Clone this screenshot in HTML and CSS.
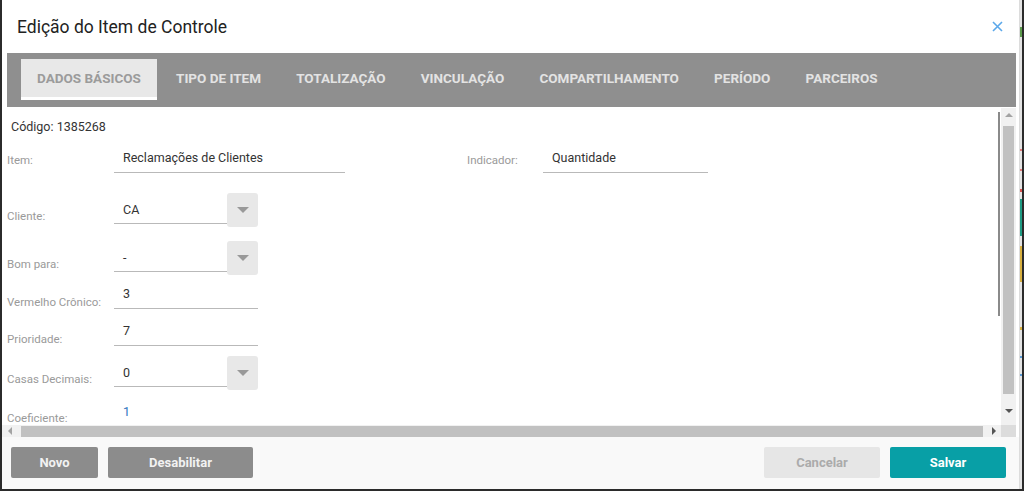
FILE: index.html
```html
<!DOCTYPE html>
<html lang="pt-BR">
<head>
<meta charset="UTF-8" />
<meta name="viewport" content="width=device-width, initial-scale=1.0"/>
<title>Edição do Item de Controle</title>
<link rel="stylesheet" href="styles.css">
</head>
<body>
<div class="page">
  <div class="dialog">
    <div class="header">
      <h1>Edição do Item de Controle</h1>
      <button class="close" title="Fechar">
        <svg width="11" height="11" viewBox="0 0 11 11"><path d="M1 1L10 10M10 1L1 10" stroke="#5ba8ea" stroke-width="1.6" fill="none"/></svg>
      </button>
    </div>

    <div class="tabs">
      <div class="tab active">DADOS BÁSICOS</div>
      <div class="tab">TIPO DE ITEM</div>
      <div class="tab">TOTALIZAÇÃO</div>
      <div class="tab">VINCULAÇÃO</div>
      <div class="tab">COMPARTILHAMENTO</div>
      <div class="tab">PERÍODO</div>
      <div class="tab">PARCEIROS</div>
    </div>

    <div class="body">
      <div class="content">
        <div class="code">Código: 1385268</div>

        <div class="row first">
          <label class="label">Item:</label>
          <div class="input w-item">Reclamações de Clientes</div>
          <label class="label label-ind">Indicador:</label>
          <div class="input w-ind">Quantidade</div>
        </div>

        <div class="row sel row-cliente">
          <label class="label">Cliente:</label>
          <div class="select">
            <div class="select-value">CA</div>
            <div class="select-btn"><span class="caret"></span></div>
          </div>
        </div>

        <div class="row sel row-bom">
          <label class="label">Bom para:</label>
          <div class="select">
            <div class="select-value">-</div>
            <div class="select-btn"><span class="caret"></span></div>
          </div>
        </div>

        <div class="row row-tight">
          <label class="label">Vermelho Crônico:</label>
          <div class="input w-short">3</div>
        </div>

        <div class="row">
          <label class="label">Prioridade:</label>
          <div class="input w-short">7</div>
        </div>

        <div class="row sel">
          <label class="label">Casas Decimais:</label>
          <div class="select">
            <div class="select-value">0</div>
            <div class="select-btn"><span class="caret"></span></div>
          </div>
        </div>

        <div class="row row-last">
          <label class="label">Coeficiente:</label>
          <div class="input w-short link">1</div>
        </div>

        <div class="inner-scroll"></div>
      </div>

      <!-- fake scrollbars of the content panel -->
      <div class="vscroll">
        <span class="arrow up"></span>
        <div class="vthumb"></div>
        <span class="arrow down"></span>
      </div>
      <div class="hscroll">
        <span class="arrow left"></span>
        <div class="hthumb"></div>
        <span class="arrow right"></span>
      </div>
      <div class="corner"></div>
    </div>

    <div class="footer">
      <button class="btn btn-gray btn-novo">Novo</button>
      <button class="btn btn-gray btn-wide">Desabilitar</button>
      <div class="spacer"></div>
      <button class="btn btn-light">Cancelar</button>
      <button class="btn btn-teal">Salvar</button>
    </div>
  </div>
  <div class="strip"></div>
</div>
</body>
</html>
```

FILE: styles.css
```css
* {
  box-sizing: border-box;
}

html, body {
  margin: 0;
  height: 491px;
  overflow: hidden;
}

body {
  background: #2b2b2b;
  padding: 0 2px 2px 2px;
  font-family: Roboto, "Liberation Sans", sans-serif;
}

.page {
  display: flex;
  height: 489px;
}

.dialog {
  width: 1018px;
  background: #fff;
  border-right: 1px solid #dcdcdc;
  display: flex;
  flex-direction: column;
}

.strip {
  flex: 1;
  background: linear-gradient(to bottom,
    #e4e4e4 0, #e4e4e4 27px, #5c9a4c 27px, #5c9a4c 37px,
    #e4e4e4 37px, #e4e4e4 149px, #e07a7a 149px, #e07a7a 151px,
    #e4e4e4 151px, #e4e4e4 169px, #e07a7a 169px, #e07a7a 171px,
    #e4e4e4 171px, #e4e4e4 189px, #d9534f 189px, #d9534f 192px,
    #e4e4e4 192px, #e4e4e4 199px, #1f9c84 199px, #1f9c84 236px,
    #e4e4e4 236px, #e4e4e4 246px, #d8b040 246px, #d8b040 282px,
    #e4e4e4 282px, #e4e4e4 327px, #d8b040 327px, #d8b040 330px,
    #e4e4e4 330px, #e4e4e4 356px, #5b9bd5 356px, #5b9bd5 358px,
    #e4e4e4 358px, #e4e4e4 374px, #5b9bd5 374px, #5b9bd5 376px,
    #e4e4e4 376px);
}

/* header */
.header {
  height: 53px;
  display: flex;
  align-items: center;
  justify-content: space-between;
  padding: 0 16px 0 15px;
}

.header h1 {
  margin: 0;
  font-size: 17.5px;
  font-weight: 400;
  color: #222;
}

.close {
  border: none;
  background: none;
  padding: 0;
  display: flex;
  cursor: pointer;
}

/* tabs */
.tabs {
  height: 54px;
  margin: 0 3px 0 5px;
  background: #8f8f8f;
  display: flex;
  gap: 3.2px;
  padding: 6px 0 0 14px;
}

.tab {
  height: 41px;
  padding: 0 16px;
  line-height: 38px;
  font-size: 13.5px;
  font-weight: 700;
  color: #e3e3e3;
  border-bottom: 3px solid transparent;
  cursor: pointer;
}

.tab.active {
  background: #e8e8e8;
  color: #9b9b9b;
  border-bottom-color: #fff;
}

/* content panel */
.body {
  height: 330px;
  margin-right: 3px;
  padding-top: 1px;
  display: grid;
  grid-template-columns: 1fr 15px;
  grid-template-rows: 1fr 12px;
}

.content {
  position: relative;
  overflow: hidden;
  padding: 9px 0 0 5px;
  display: flex;
  flex-direction: column;
  gap: 10px;
}

.code {
  font-size: 12.5px;
  color: #333;
  padding-left: 4px;
  line-height: 19px;
}

.row {
  display: flex;
  align-items: flex-end;
  flex-shrink: 0;
}

.row-cliente {
  margin-top: 10px;
}

.row-bom {
  margin-top: 4px;
}

.row-tight {
  margin-top: -3px;
}

.label {
  width: 107px;
  font-size: 11.5px;
  line-height: 14px;
  color: #9a9a9a;
}

.row.first .label {
  padding-bottom: 6px;
}

.row.sel .label {
  padding-bottom: 4px;
}

.row-cliente .label {
  padding-bottom: 9px;
}

/* the last row sits under the horizontal scrollbar */
.row-last .label {
  padding-bottom: 2px;
}

.label-ind {
  width: 76px;
  margin-left: 122px;
}

.input {
  height: 27px;
  padding: 4px 0 0 9px;
  font-size: 12.5px;
  line-height: 16px;
  color: #333;
  border-bottom: 1px solid #b9b9b9;
}

.input.link {
  color: #2f77c0;
  border-bottom-color: transparent;
}

.w-item { width: 231px; }
.w-ind { width: 165px; }
.w-short { width: 144px; }

.select {
  width: 144px;
  height: 34px;
  display: flex;
  align-items: flex-start;
}

.select-value {
  flex: 1;
  height: 31px;
  padding: 9px 0 0 9px;
  font-size: 12.5px;
  line-height: 16px;
  color: #333;
  border-bottom: 1px solid #b9b9b9;
}

.select-btn {
  width: 31px;
  height: 34px;
  background: #e8e8e8;
  border-radius: 3px;
  display: flex;
  align-items: center;
  justify-content: center;
}

.caret {
  width: 0;
  height: 0;
  border-left: 6px solid transparent;
  border-right: 6px solid transparent;
  border-top: 6px solid #999;
}

.inner-scroll {
  position: absolute;
  top: 4px;
  right: 1px;
  width: 2px;
  height: 204px;
  background: #8a8a8a;
}

/* scrollbars */
.vscroll {
  background: #f1f1f1;
  display: flex;
  flex-direction: column;
  align-items: center;
}

.vthumb {
  width: 11px;
  height: 268px;
  background: #c1c1c1;
  margin: 9px 0 15px;
}

.hscroll {
  background: #f1f1f1;
  display: flex;
  align-items: center;
}

.hthumb {
  flex: 1;
  height: 11px;
  background: #c1c1c1;
  margin: 0 9px 0 9px;
}

.corner {
  background: #dcdcdc;
}

.arrow {
  width: 0;
  height: 0;
}

.arrow.up {
  margin-top: 5px;
  border-left: 4px solid transparent;
  border-right: 4px solid transparent;
  border-bottom: 4px solid #a3a3a3;
}

.arrow.down {
  border-left: 4px solid transparent;
  border-right: 4px solid transparent;
  border-top: 4px solid #555;
}

.arrow.left {
  margin-left: 6px;
  border-top: 4px solid transparent;
  border-bottom: 4px solid transparent;
  border-right: 4px solid #a3a3a3;
}

.arrow.right {
  margin-right: 5px;
  border-top: 4px solid transparent;
  border-bottom: 4px solid transparent;
  border-left: 4px solid #555;
}

/* footer */
.footer {
  flex: 1;
  background: #f9f9f9;
  display: flex;
  gap: 10px;
  padding: 10px 13px 0 9px;
}

.spacer {
  flex: 1;
}

.btn {
  height: 31px;
  border: none;
  border-radius: 2px;
  font-family: Roboto, "Liberation Sans", sans-serif;
  font-size: 13px;
  font-weight: 700;
  cursor: pointer;
}

.btn-gray {
  background: #8c8c8c;
  color: #f2f2f2;
}

.btn-novo { width: 87px; }
.btn-wide { width: 145px; }

.btn-light {
  width: 116px;
  background: #e6e6e6;
  color: #ababab;
}

.btn-teal {
  width: 116px;
  background: #089fa6;
  color: #fff;
}
```
